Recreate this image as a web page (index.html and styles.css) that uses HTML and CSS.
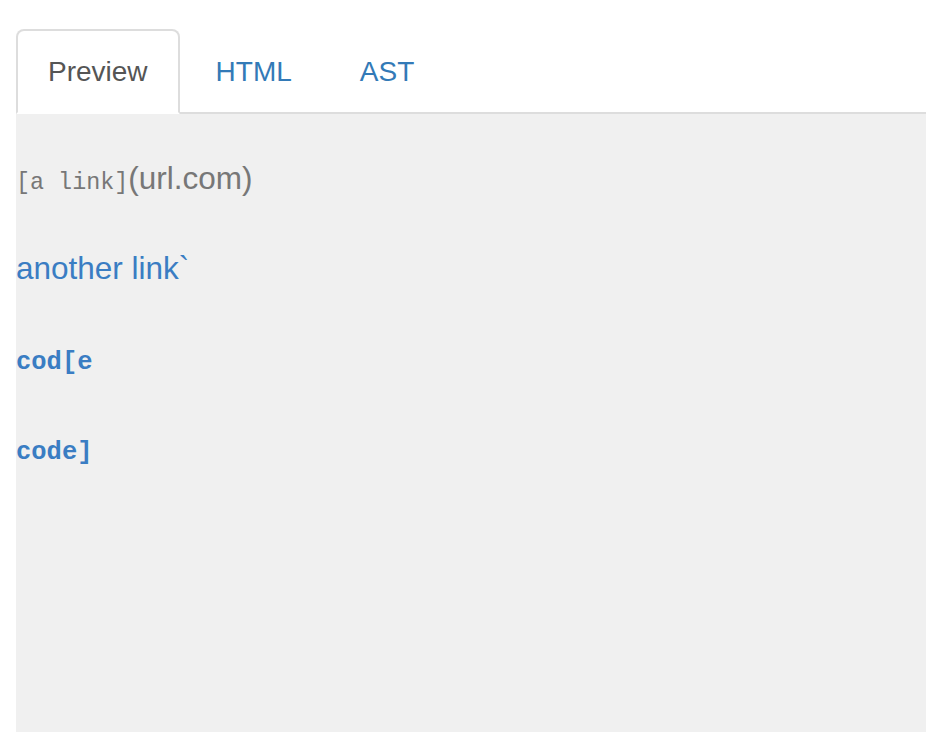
FILE: index.html
```html
<!DOCTYPE html>
<html>
<head>
<meta charset="utf-8">
<link rel="stylesheet" href="styles.css">
</head>
<body>
<div class="page">
  <ul class="tabs">
    <li class="tab active"><a>Preview</a></li>
    <li class="tab"><a>HTML</a></li>
    <li class="tab"><a>AST</a></li>
  </ul>
  <div class="panel">
    <p class="line muted"><code>[a link]</code>(url.com)</p>
    <p class="line"><a class="link">another link`</a></p>
    <p class="line"><a class="link"><code class="bold">cod[e</code></a></p>
    <p class="line"><a class="link"><code class="bold">code]</code></a></p>
  </div>
</div>
</body>
</html>
```
FILE: styles.css
```css
html, body {
  margin: 0;
  padding: 0;
  background: #fff;
  height: 100%;
}
body {
  font-family: "Liberation Sans", Arial, sans-serif;
  font-size: 28px;
  line-height: 40px;
  color: #333;
}
.page {
  padding: 29px 0 0 16px;
  height: 732px;
  box-sizing: border-box;
  display: flex;
  flex-direction: column;
}
.tabs {
  list-style: none;
  margin: 0;
  padding: 0;
  display: flex;
  border-bottom: 2px solid #dddddd;
}
.tab {
  margin-right: 4px;
  margin-bottom: -2px;
}
.tab a {
  display: block;
  padding: 21px 30px 20px;
  border: 2px solid transparent;
  border-radius: 8px 8px 0 0;
  color: #337ab7;
}
.tab.active a {
  color: #555;
  background: #fff;
  border-color: #dddddd #dddddd transparent;
}
.panel {
  flex: 1;
  background: #f0f0f0;
  padding-top: 44px;
}
.line {
  margin: 0 0 50px;
  height: 40px;
  font-size: 31.5px;
  white-space: nowrap;
}
.muted {
  color: #777;
}
code {
  font-family: "Liberation Mono", "Courier New", monospace;
  font-size: 23.4px;
}
.link {
  color: #3a7dc3;
}
code.bold {
  font-size: 25.5px;
  font-weight: bold;
}
```
